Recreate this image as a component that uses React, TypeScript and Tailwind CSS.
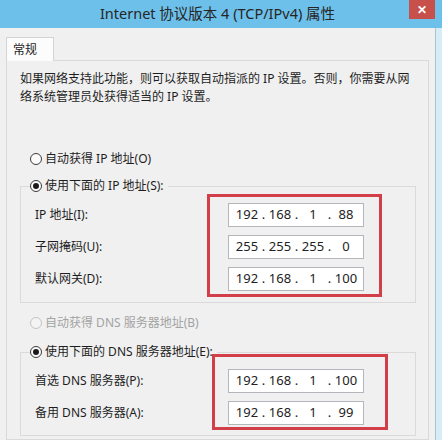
import React from 'react';

const font = { fontFamily: '"Noto Sans", "Noto Sans CJK SC", sans-serif' };

type Radio = { checked?: boolean; disabled?: boolean; label: string };

const RadioRow: React.FC<Radio> = ({ checked, disabled, label }) => (
    <div className="flex items-center h-[18px] gap-[3px]">
        <span
            className={
                'w-[12px] h-[12px] rounded-full border flex items-center justify-center ' +
                (disabled ? 'border-[#c4c4c4] bg-[#f4f4f4]' : 'border-[#3c3c3c] bg-[#fbfbfb]')
            }
        >
            {checked && <span className="w-[6px] h-[6px] rounded-full bg-[#1a1a1a]" />}
        </span>
        <span className={'text-[12px] leading-[18px] ' + (disabled ? 'text-[#a3a3a3]' : 'text-[#1e1e1e]')}>{label}</span>
    </div>
);

const IpBox: React.FC<{ parts: string[] }> = ({ parts }) => (
    <div className="w-[136px] h-[24px] border border-[#b4b6bb] bg-white flex items-center pl-[5px] text-[13px] text-[#222]">
        {parts.map((p, i) => (
            <React.Fragment key={i}>
                {i > 0 && <span className="w-[7px] text-center">.</span>}
                <span className="w-[26px] text-center">{p}</span>
            </React.Fragment>
        ))}
    </div>
);

const Row: React.FC<{ label: string; parts: string[] }> = ({ label, parts }) => (
    <div className="flex items-center pl-[5px]">
        <span className="w-[193px] text-[12px] text-[#1e1e1e]">{label}</span>
        <IpBox parts={parts} />
    </div>
);

export default function App() {
    return (
        <div className="w-[442px] h-[440px] overflow-hidden flex flex-col bg-[#f0f0f0]" style={font}>
            {/* title bar */}
            <div className="h-[28px] bg-[#6dc0ea] flex items-start shrink-0">
                <div className="flex-1 h-[28px] flex items-center justify-center pl-[26px] text-[14.5px] text-[#262626]">
                    Internet 协议版本 4 (TCP/IPv4) 属性
                </div>
                <div className="w-[26px] h-[19px] bg-[#c8504b] flex items-center justify-center text-white text-[12px] font-bold mr-[7px]">
                    ✕
                </div>
            </div>

            <div className="flex-1 flex">
                <div className="w-[435px] pl-[6px] pt-[9px] flex flex-col">
                    {/* tab */}
                    <div className="relative z-10 w-[48px] h-[24px] mb-[-1px] border border-b-0 border-[#d4d4d4] bg-[#fcfcfc] flex items-center pl-[6px] text-[12px] text-[#1e1e1e]">
                        常规
                    </div>
                    {/* panel */}
                    <div className="w-[423px] flex-1 border border-[#d9d9d9] pl-[13px] pt-[9px]">
                        <p className="text-[12px] leading-[18px] text-[#1e1e1e] w-[390px]">
                            如果网络支持此功能，则可以获取自动指派的 IP 设置。否则，你需要从网络系统管理员处获得适当的 IP 设置。
                        </p>

                        <div className="pl-[10px] mt-[44px]">
                            <RadioRow label="自动获得 IP 地址(O)" />
                        </div>

                        <fieldset className="w-[396px] mt-[9px] border border-[#dadada] pl-[9px] pt-[8px] pb-[11px]">
                            <legend className="pr-[4px]">
                                <RadioRow checked label="使用下面的 IP 地址(S):" />
                            </legend>
                            <div className="relative flex flex-col gap-[8px]">
                                <Row label="IP 地址(I):" parts={['192', '168', '1', '88']} />
                                <Row label="子网掩码(U):" parts={['255', '255', '255', '0']} />
                                <Row label="默认网关(D):" parts={['192', '168', '1', '100']} />
                                <div className="absolute left-[177px] top-[-9px] w-[175px] h-[103px] border-[3px] border-[#d23f48]" />
                            </div>
                        </fieldset>

                        <div className="pl-[10px] mt-[11px]">
                            <RadioRow disabled label="自动获得 DNS 服务器地址(B)" />
                        </div>

                        <fieldset className="w-[396px] mt-[11px] border border-[#dadada] pl-[9px] pt-[8px] pb-[10px]">
                            <legend className="pr-[4px]">
                                <RadioRow checked label="使用下面的 DNS 服务器地址(E):" />
                            </legend>
                            <div className="relative flex flex-col gap-[8px]">
                                <Row label="首选 DNS 服务器(P):" parts={['192', '168', '1', '100']} />
                                <Row label="备用 DNS 服务器(A):" parts={['192', '168', '1', '99']} />
                                <div className="absolute left-[182px] top-[-15px] w-[176px] h-[76px] border-[3px] border-[#d23f48]" />
                            </div>
                        </fieldset>
                    </div>
                </div>
                <div className="flex-1 border-l border-[#a9c4d2] bg-[#d8ecf6]" />
            </div>
        </div>
    );
}
